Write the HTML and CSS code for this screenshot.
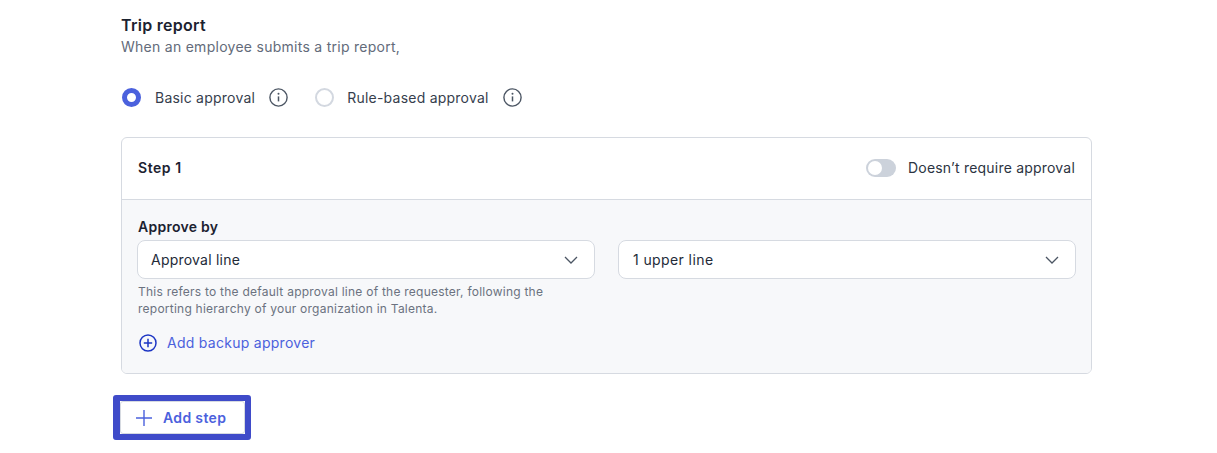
FILE: index.html
```html
<!DOCTYPE html>
<html lang="en">
<head>
<meta charset="utf-8">
<title>Trip report</title>
<link rel="stylesheet" href="styles.css">
</head>
<body>
<main class="page">
  <h1 class="title">Trip report</h1>
  <p class="subtitle">When an employee submits a trip report,</p>
  <div class="radios">
    <span class="radio radio-on"></span>
    <span class="radio-label">Basic approval</span>
    <svg class="info" viewBox="0 0 19 19"><circle cx="9.5" cy="9.5" r="8.6" fill="none" stroke="#4b5563" stroke-width="1.4"/><path d="M9.5 8.4v5" stroke="#4b5563" stroke-width="1.5"/><circle cx="9.5" cy="5.8" r="1" fill="#4b5563"/></svg>
    <span class="radio radio-off"></span>
    <span class="radio-label">Rule-based approval</span>
    <svg class="info" viewBox="0 0 19 19"><circle cx="9.5" cy="9.5" r="8.6" fill="none" stroke="#4b5563" stroke-width="1.4"/><path d="M9.5 8.4v5" stroke="#4b5563" stroke-width="1.5"/><circle cx="9.5" cy="5.8" r="1" fill="#4b5563"/></svg>
  </div>
  <section class="card">
    <header class="card-head">
      <span class="step">Step 1</span>
      <span class="toggle-wrap"><span class="toggle"><span class="knob"></span></span><span class="toggle-label">Doesn’t require approval</span></span>
    </header>
    <div class="card-body">
      <div class="label">Approve by</div>
      <div class="selects">
        <div class="select"><span>Approval line</span><svg class="chev" viewBox="0 0 14 8"><path d="M1 1l6 6 6-6" fill="none" stroke="#4b5563" stroke-width="1.3"/></svg></div>
        <div class="select select-alt"><span>1 upper line</span><svg class="chev" viewBox="0 0 14 8"><path d="M1 1l6 6 6-6" fill="none" stroke="#4b5563" stroke-width="1.3"/></svg></div>
      </div>
      <p class="help">This refers to the default approval line of the requester, following the<br>reporting hierarchy of your organization in Talenta.</p>
      <div class="backup">
        <svg class="plus-circle" viewBox="0 0 18 18"><circle cx="9" cy="9" r="8" fill="none" stroke="#1d36c4" stroke-width="1.5"/><path d="M9 4.8v8.4M4.8 9h8.4" stroke="#1d36c4" stroke-width="1.5"/></svg>
        <span>Add backup approver</span>
      </div>
    </div>
  </section>
  <div class="highlight">
    <button class="add-step" type="button">
      <svg class="plus" viewBox="0 0 18 18"><path d="M9 1v16M1 9h16" stroke="#4b61dd" stroke-width="1.4"/></svg>
      <span>Add step</span>
    </button>
  </div>
</main>
</body>
</html>
```
FILE: styles.css
```css
* { box-sizing: border-box; }
html, body { margin: 0; padding: 0; background: #fff; }
body { width: 1217px; height: 453px; overflow: hidden; font-family: Inter, "Liberation Sans", sans-serif; color: #1f2937; letter-spacing: 0.27px; }
.page { padding: 15px 0 0 121px; width: 1092px; }
.title { margin: 0; font-size: 16px; line-height: 20px; font-weight: 600; color: #1c2230; }
.subtitle { margin: 2px 0 0; font-size: 14px; line-height: 20px; color: #636b7a; }
.radios { display: flex; align-items: center; margin-top: 30px; height: 20px; font-size: 14px; letter-spacing: 0.23px; color: #363e4d; }
.radio { width: 19px; height: 19px; border-radius: 50%; flex: none; background: #fff; }
.radio-on { border: 5px solid #4b61dd; margin: 0 1px; }
.radio-off { border: 2px solid #d3d8e0; }
.radio-label { margin-left: 13px; }
.info { width: 19px; height: 19px; margin: 0 27px 0 14px; flex: none; }
.card { margin-top: 30px; border: 1px solid #d6dae1; border-radius: 6px; overflow: hidden; width: 971px; }
.card-head { display: flex; justify-content: space-between; align-items: center; height: 62px; padding: 0 16px 2px; border-bottom: 1px solid #d6dae1; }
.step { font-size: 14px; font-weight: 600; color: #1c2230; letter-spacing: 0.55px; }
.toggle-wrap { display: flex; align-items: center; gap: 12px; font-size: 14px; letter-spacing: 0.2px; color: #2c3442; }
.toggle { width: 30px; height: 18px; border-radius: 9px; background: #ccd2db; padding: 2px; display: block; }
.knob { display: block; width: 14px; height: 14px; border-radius: 50%; background: #fff; }
.card-body { background: #f7f8fa; padding: 18px 15px 0; height: 173px; }
.label { font-size: 14px; line-height: 18px; font-weight: 600; color: #1c2230; padding-left: 1px; }
.selects { display: grid; grid-template-columns: 458px 458px; gap: 23px; margin-top: 4px; }
.select { height: 39px; border: 1px solid #d6dae1; border-radius: 8px; background: #fff; display: flex; align-items: center; justify-content: space-between; padding: 0 16px 0 13px; font-size: 14px; letter-spacing: 0.22px; color: #232a38; }
.select-alt { padding-left: 14px; letter-spacing: 0.4px; }
.chev { width: 14px; height: 8px; }
.help { margin: 4px 0 0 1px; font-size: 12px; line-height: 17px; letter-spacing: 0.24px; color: #6b7280; }
.backup { display: flex; align-items: center; gap: 10px; margin: 16px 0 0 2px; font-size: 14px; line-height: 20px; color: #4b61dd; }
.plus-circle { width: 18px; height: 18px; }
.highlight { margin: 21px 0 0 -8px; width: 138px; height: 45px; border: 6px solid #3f4bc9; border-left-width: 7px; border-radius: 3px; }
.add-step { display: flex; align-items: center; gap: 10px; width: 100%; height: 100%; padding: 0 0 0 14px; background: #fff; border: 1px solid #d6dae1; border-radius: 3px; font: 600 14px Inter, "Liberation Sans", sans-serif; letter-spacing: 0.35px; color: #4b61dd; }
.plus { width: 18px; height: 18px; }
```
